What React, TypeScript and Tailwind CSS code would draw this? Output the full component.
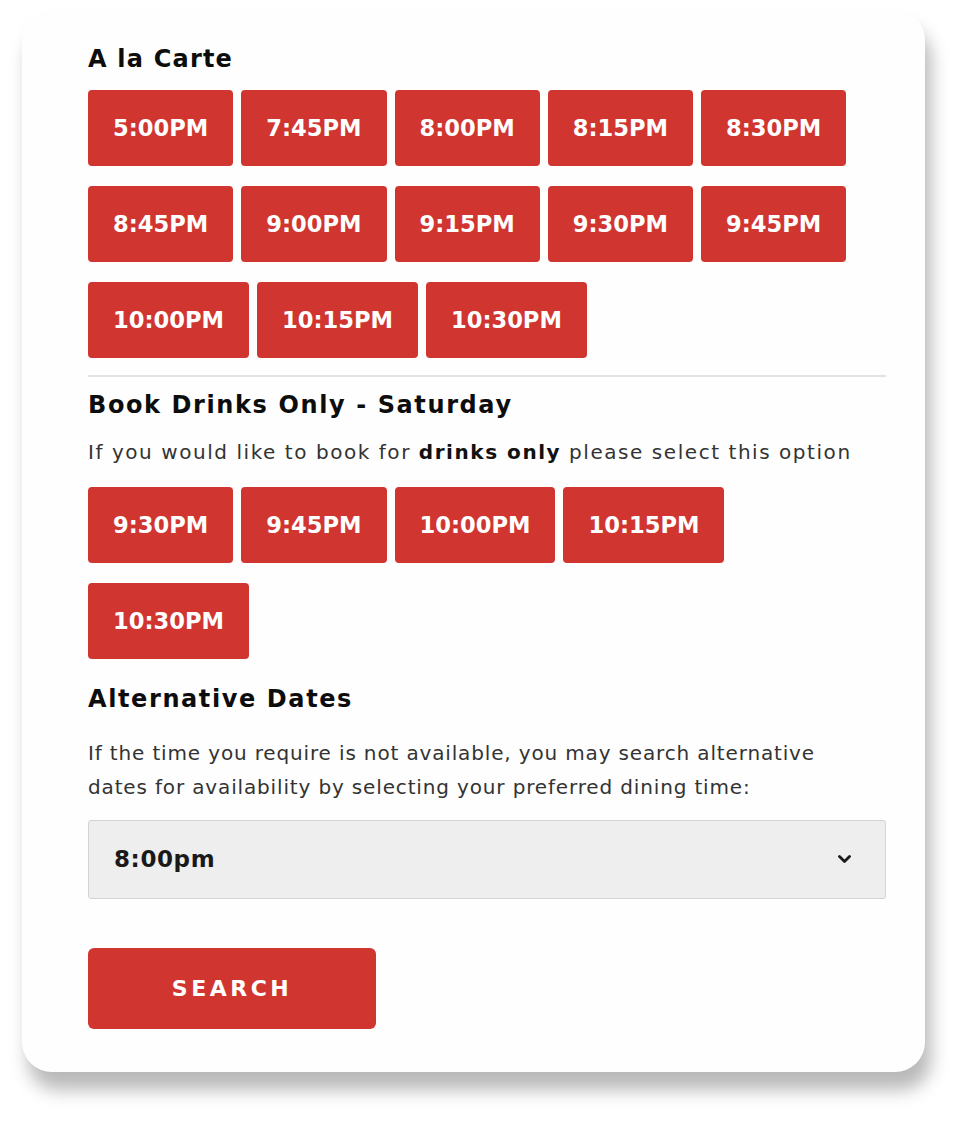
import React from 'react'

const A_LA_CARTE = [
  ['5:00PM', '7:45PM', '8:00PM', '8:15PM', '8:30PM'],
  ['8:45PM', '9:00PM', '9:15PM', '9:30PM', '9:45PM'],
  ['10:00PM', '10:15PM', '10:30PM'],
]

const DRINKS = [
  ['9:30PM', '9:45PM', '10:00PM', '10:15PM'],
  ['10:30PM'],
]

const font = "font-['DejaVu_Sans',sans-serif]"

const TimeButton = ({ label }: { label: string }) => {
  return (
    <button className="h-[76px] px-[25px] rounded-[4px] bg-[#d13530] text-white text-[22.6px] font-bold leading-none">
      {label}
    </button>
  )
}

const TimeGrid = ({ rows }: { rows: string[][] }) => {
  return (
    <div className="flex flex-col gap-[20px]">
      {rows.map((row, i) => (
        <div key={i} className="flex gap-[8px]">
          {row.map((t) => (
            <TimeButton key={t} label={t} />
          ))}
        </div>
      ))}
    </div>
  )
}

const App = () => {
  return (
    <div className={`w-[966px] h-[1124px] bg-white pt-[10px] ${font}`}>
      <div className="ml-[22px] w-[903px] h-[1062px] rounded-[30px] bg-[#fefefe] shadow-[6px_18px_18px_rgba(0,0,0,0.28)] pl-[66px] pr-[39px] pt-[35px]">
        <h2 className="text-[24px] leading-[29px] font-bold tracking-[1.2px] text-[#0d0d0d]">A la Carte</h2>
        <div className="mt-[16px]">
          <TimeGrid rows={A_LA_CARTE} />
        </div>
        <div className="mt-[17px] h-[2px] bg-[#e2e2e2]" />
        <h2 className="mt-[14px] text-[24px] leading-[29px] font-bold tracking-[1.6px] text-[#0d0d0d]">
          Book Drinks Only - Saturday
        </h2>
        <p className="mt-[18px] text-[20px] leading-[28px] tracking-[1.55px] text-[#333]">
          If you would like to book for <b className="text-[#111]">drinks only</b> please select this option
        </p>
        <div className="mt-[21px]">
          <TimeGrid rows={DRINKS} />
        </div>
        <h2 className="mt-[26px] text-[24px] leading-[29px] font-bold tracking-[1.6px] text-[#0d0d0d]">Alternative Dates</h2>
        <p className="mt-[22px] max-w-[750px] text-[20px] leading-[34px] tracking-[0.85px] text-[#333]">
          If the time you require is not available, you may search alternative dates for availability by selecting
          your preferred dining time:
        </p>
        <div className="mt-[16px] h-[79px] rounded-[3px] border border-[#d3d3d3] bg-[#eeeeee] flex items-center justify-between pl-[25px] pr-[34px]">
          <span className="text-[23px] font-bold tracking-[0.6px] text-[#1a1a1a]">8:00pm</span>
          <svg width="13" height="9" viewBox="0 0 13 9" fill="none">
            <polyline points="1.5,1.5 6.5,6.5 11.5,1.5" stroke="#1a1a1a" strokeWidth="2.8" strokeLinecap="round" strokeLinejoin="round" />
          </svg>
        </div>
        <button className="mt-[49px] w-[288px] h-[81px] rounded-[6px] bg-[#d13530] text-white text-[22px] font-bold tracking-[3.5px]">
          SEARCH
        </button>
      </div>
    </div>
  )
}

export default App
